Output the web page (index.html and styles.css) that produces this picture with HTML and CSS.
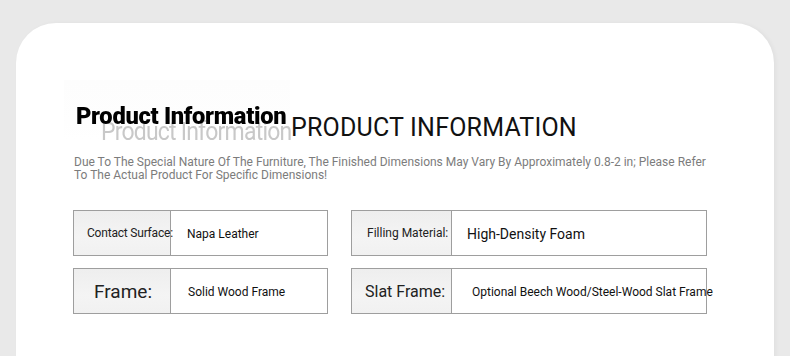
FILE: index.html
```html
<!DOCTYPE html>
<html lang="en">
<head>
    <meta charset="UTF-8">
    <meta name="viewport" content="width=device-width, initial-scale=1.0">
    <title>Product Information</title>
    <link rel="stylesheet" href="styles.css">
</head>
<body>
    <div class="card">
        <!-- Heading -->
        <div class="head">
            <div class="head-bg"></div>
            <div class="title-line">
                <span class="ghost">Product Information</span>
                <span class="caps">PRODUCT INFORMATION</span>
            </div>
            <h1 class="title">Product Information</h1>
            <p class="note">Due To The Special Nature Of The Furniture, The Finished Dimensions May Vary By Approximately 0.8-2 in; Please Refer<br>To The Actual Product For Specific Dimensions!</p>
        </div>

        <!-- Spec table -->
        <div class="specs">
            <div class="spec spec-left">
                <div class="label small">Contact Surface:</div>
                <div class="value">Napa Leather</div>
            </div>
            <div class="spec spec-right">
                <div class="label small">Filling Material:</div>
                <div class="value big">High-Density Foam</div>
            </div>
            <div class="spec spec-left">
                <div class="label large">Frame:</div>
                <div class="value pad">Solid Wood Frame</div>
            </div>
            <div class="spec spec-right">
                <div class="label medium">Slat Frame:</div>
                <div class="value pad-more">Optional Beech Wood/Steel-Wood Slat Frame</div>
            </div>
        </div>
    </div>
</body>
</html>
```

FILE: styles.css
```css
body{
    margin: 0;
    padding: 0;
    background: #e9e9e9;
    font-family: Roboto, "Liberation Sans", sans-serif;
    height: 356px;
    overflow: hidden;
}
.card{
    margin: 23px 16px 0;
    height: 420px;
    background: #fff;
    border-radius: 40px;
    padding: 57px 0 0 57px;
    box-sizing: border-box;
    box-shadow: 2px 0 4px rgba(0, 0, 0, 0.04);
}
.head{
    position: relative;
    padding-left: 1px;
}
.head-bg{
    position: absolute;
    left: -9px;
    top: 0;
    width: 226px;
    height: 60px;
    background: linear-gradient(180deg, #fdfdfd, #fefefe 70%, #fff);
}
.title-line{
    position: relative;
    padding-top: 34px;
    height: 28px;
    line-height: 28px;
    white-space: nowrap;
}
.ghost{
    display: inline-block;
    width: 186px;
    margin-left: 27px;
    font-size: 23px;
    color: #c8c8c8;
    letter-spacing: -0.8px;
    filter: blur(0.6px);
    transform: translateY(3px) scaleY(1.1);
}
.caps{
    font-size: 25px;
    color: #111;
    letter-spacing: 0.2px;
}
.title{
    position: absolute;
    left: 3px;
    top: 22px;
    margin: 0;
    font-size: 23px;
    font-weight: 900;
    color: #000;
    letter-spacing: -0.3px;
    transform: scaleX(1.03) scaleY(1.08);
    transform-origin: left;
}
.note{
    position: relative;
    margin: 14px 0 0;
    font-size: 12px;
    line-height: 13px;
    color: #7c7c7c;
}
.specs{
    display: grid;
    grid-template-columns: 255px 356px;
    column-gap: 23px;
    row-gap: 12px;
    margin-top: 28px;
}
.spec{
    display: flex;
    height: 46px;
    border: 1px solid #9e9e9e;
    box-sizing: border-box;
}
.label{
    display: flex;
    align-items: center;
    flex-shrink: 0;
    box-sizing: border-box;
    background: linear-gradient(180deg, #eeeeee, #f4f4f4 60%, #f1f1f1);
    border-right: 1px solid #9e9e9e;
    color: #222;
    white-space: nowrap;
}
.spec-left .label{
    width: 97px;
}
.spec-right .label{
    width: 100px;
}
.label.small{
    font-size: 12px;
    padding-left: 13px;
    letter-spacing: -0.2px;
}
.spec-right .label.small{
    padding-left: 15px;
    letter-spacing: 0;
}
.label.large{
    font-size: 19px;
    padding-left: 20px;
}
.label.medium{
    font-size: 16px;
    padding-left: 13px;
}
.value{
    display: flex;
    align-items: center;
    padding-left: 16px;
    padding-top: 1px;
    font-size: 12px;
    color: #111;
    white-space: nowrap;
}
.value.big{
    font-size: 14px;
    padding-left: 15px;
}
.value.pad{
    padding-left: 17px;
}
.value.pad-more{
    padding-left: 20px;
}
```
